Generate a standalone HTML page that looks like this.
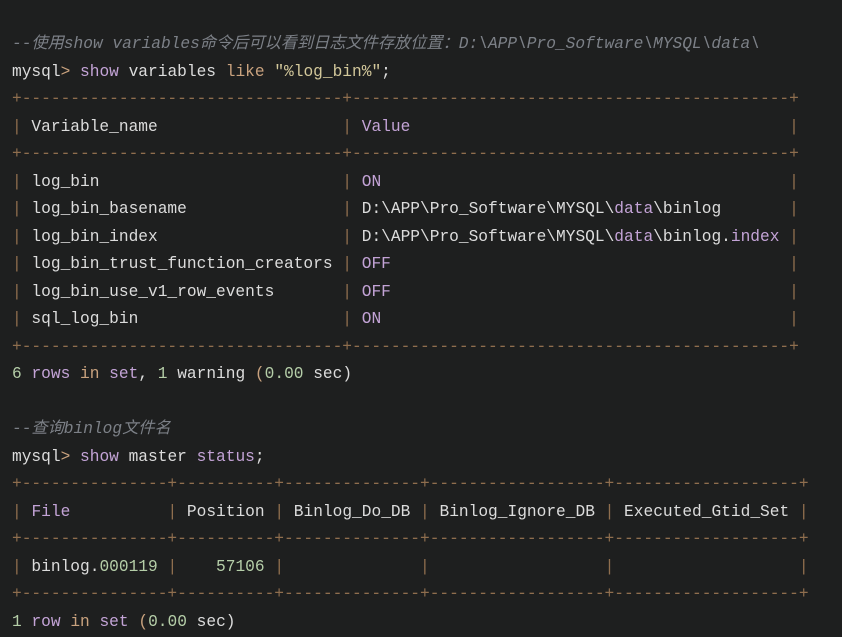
<!DOCTYPE html>
<html><head><meta charset="utf-8"><style>
html,body{margin:0;padding:0;background:#1e1f1f;width:842px;height:637px;overflow:hidden}
pre{margin:0;padding:31px 0 0 12px;font-family:"Liberation Mono","Noto Sans CJK SC",monospace;font-size:16.2px;line-height:27.52px;color:#dcdcdc;white-space:pre}
.c{color:#7c8087;font-style:italic}
.k{color:#c3a3d6}
.o{color:#c9a27e}
.b{color:#8f6e4e}
.g{color:#b5cea8}
.s{color:#d2c79a}
</style></head><body><pre><span class="c">--使用show variables命令后可以看到日志文件存放位置：D:\APP\Pro_Software\MYSQL\data\</span>
mysql<span class="o">&gt;</span> <span class="k">show</span> variables <span class="o">like</span> <span class="s">"%log_bin%"</span>;
<span class="b">+---------------------------------+---------------------------------------------+</span>
<span class="b">|</span> Variable_name                   <span class="b">|</span> <span class="k">Value</span>                                       <span class="b">|</span>
<span class="b">+---------------------------------+---------------------------------------------+</span>
<span class="b">|</span> log_bin                         <span class="b">|</span> <span class="k">ON</span>                                          <span class="b">|</span>
<span class="b">|</span> log_bin_basename                <span class="b">|</span> D:\APP\Pro_Software\MYSQL\<span class="k">data</span>\binlog       <span class="b">|</span>
<span class="b">|</span> log_bin_index                   <span class="b">|</span> D:\APP\Pro_Software\MYSQL\<span class="k">data</span>\binlog.<span class="k">index</span> <span class="b">|</span>
<span class="b">|</span> log_bin_trust_function_creators <span class="b">|</span> <span class="k">OFF</span>                                         <span class="b">|</span>
<span class="b">|</span> log_bin_use_v1_row_events       <span class="b">|</span> <span class="k">OFF</span>                                         <span class="b">|</span>
<span class="b">|</span> sql_log_bin                     <span class="b">|</span> <span class="k">ON</span>                                          <span class="b">|</span>
<span class="b">+---------------------------------+---------------------------------------------+</span>
<span class="g">6</span> <span class="k">rows</span> <span class="o">in</span> <span class="k">set</span>, <span class="g">1</span> warning <span class="o">(</span><span class="g">0.00</span> sec)

<span class="c">--查询binlog文件名</span>
mysql<span class="o">&gt;</span> <span class="k">show</span> master <span class="k">status</span>;
<span class="b">+---------------+----------+--------------+------------------+-------------------+</span>
<span class="b">|</span> <span class="k">File</span>          <span class="b">|</span> Position <span class="b">|</span> Binlog_Do_DB <span class="b">|</span> Binlog_Ignore_DB <span class="b">|</span> Executed_Gtid_Set <span class="b">|</span>
<span class="b">+---------------+----------+--------------+------------------+-------------------+</span>
<span class="b">|</span> binlog.<span class="g">000119</span> <span class="b">|</span>    <span class="g">57106</span> <span class="b">|</span>              <span class="b">|</span>                  <span class="b">|</span>                   <span class="b">|</span>
<span class="b">+---------------+----------+--------------+------------------+-------------------+</span>
<span class="g">1</span> <span class="k">row</span> <span class="o">in</span> <span class="k">set</span> <span class="o">(</span><span class="g">0.00</span> sec)</pre></body></html>
